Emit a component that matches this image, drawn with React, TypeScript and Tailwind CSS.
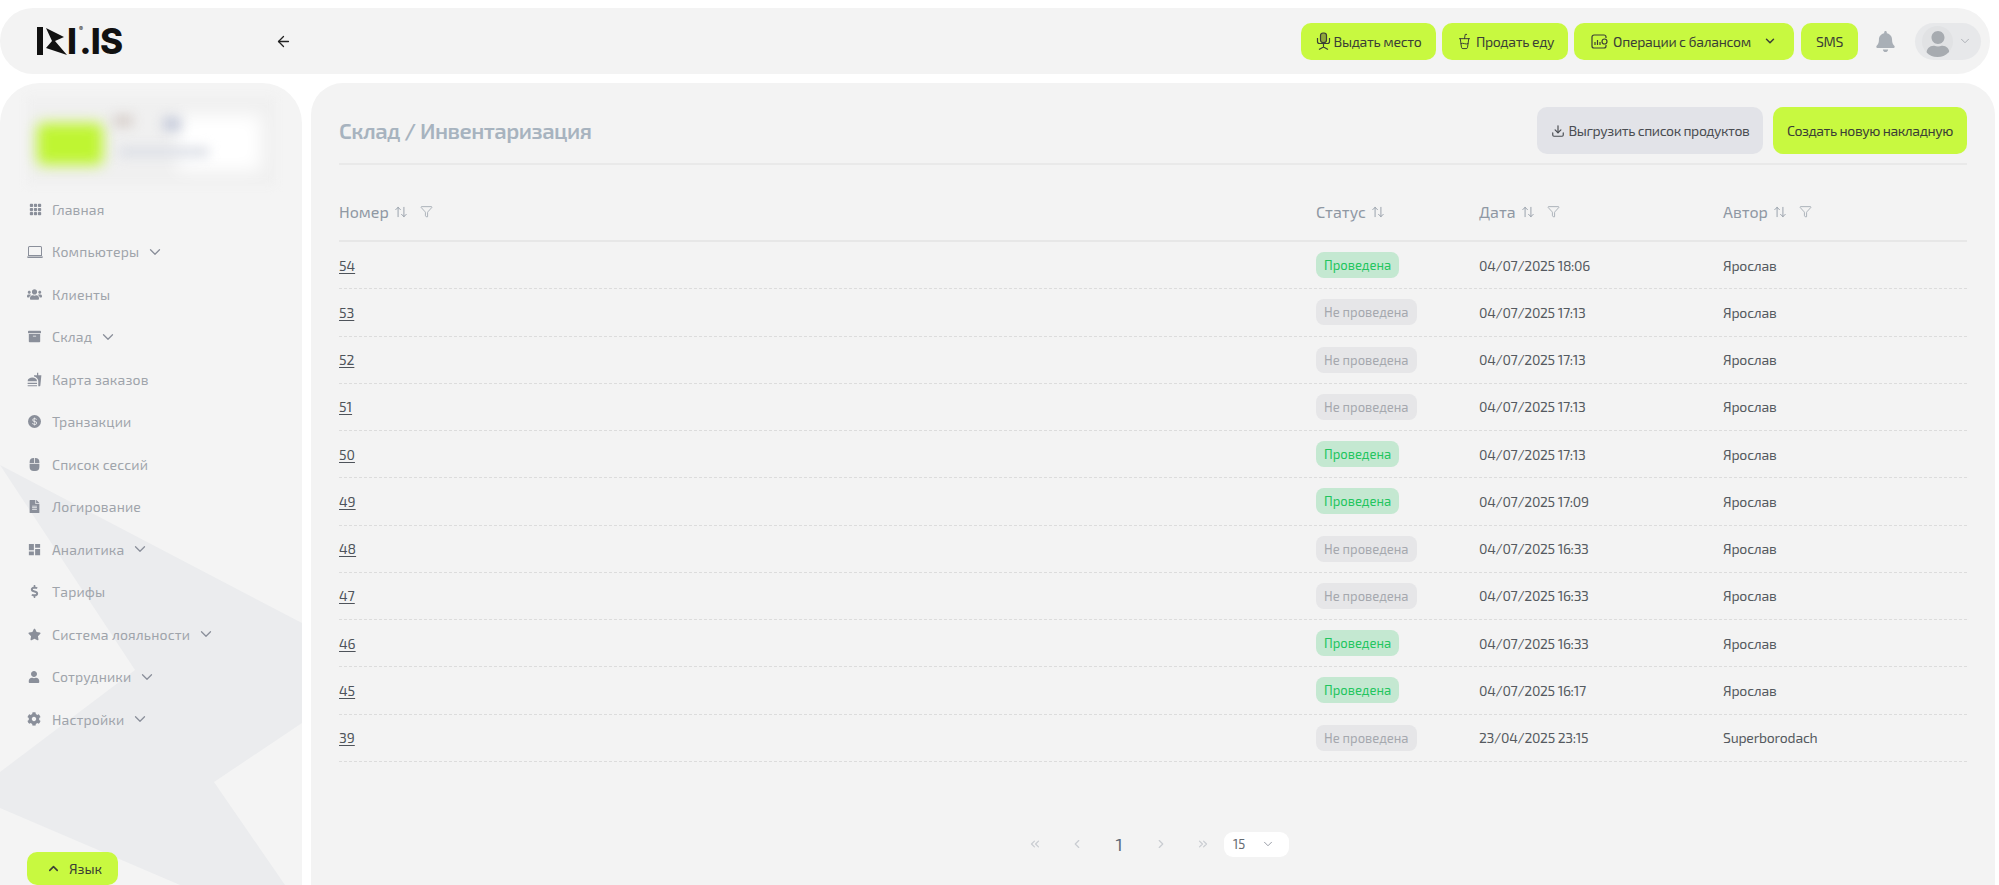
import {
  FaArchive,
  FaBell,
  FaCog,
  FaDollarSign,
  FaFileAlt,
  FaMouse,
  FaStar,
  FaUser,
  FaUsers,
} from 'react-icons/fa'
import { MdDashboard, MdFastfood } from 'react-icons/md'
import { BsGrid3X3GapFill, BsLaptop, BsCurrencyDollar } from 'react-icons/bs'
import {
  ArrowLeft,
  ArrowUpDown,
  ChevronDown,
  ChevronLeft,
  ChevronRight,
  ChevronUp,
  ChevronsLeft,
  ChevronsRight,
  CupSoda,
  Download,
  Filter,
} from 'lucide-react'
import type { ReactNode } from 'react'

const font = "font-['Exo_2','Roboto','Noto_Sans',sans-serif]"

const menu: { label: string; icon: ReactNode; more?: boolean }[] = [
  { label: 'Главная', icon: <BsGrid3X3GapFill size={13} className="ml-[2px]" /> },
  { label: 'Компьютеры', icon: <BsLaptop size={16} />, more: true },
  { label: 'Клиенты', icon: <FaUsers size={15} /> },
  { label: 'Склад', icon: <FaArchive size={13} className="ml-[1px]" />, more: true },
  { label: 'Карта заказов', icon: <MdFastfood size={15} /> },
  {
    label: 'Транзакции',
    icon: (
      <span className="ml-[1px] flex h-[13px] w-[13px] items-center justify-center rounded-full bg-[#8a8f9a] text-[#f3f3f3]">
        <BsCurrencyDollar size={9} />
      </span>
    ),
  },
  { label: 'Список сессий', icon: <FaMouse size={13} className="ml-[1px]" /> },
  { label: 'Логирование', icon: <FaFileAlt size={13} className="ml-[1px]" /> },
  { label: 'Аналитика', icon: <MdDashboard size={15} />, more: true },
  { label: 'Тарифы', icon: <FaDollarSign size={13} className="ml-[1px]" /> },
  { label: 'Система лояльности', icon: <FaStar size={13} className="ml-[1px]" />, more: true },
  { label: 'Сотрудники', icon: <FaUser size={12} className="ml-[1px]" />, more: true },
  { label: 'Настройки', icon: <FaCog size={14} />, more: true },
]

const done = 'Проведена'
const notDone = 'Не проведена'

const rows = [
  { id: 54, status: done, date: '04/07/2025 18:06', author: 'Ярослав' },
  { id: 53, status: notDone, date: '04/07/2025 17:13', author: 'Ярослав' },
  { id: 52, status: notDone, date: '04/07/2025 17:13', author: 'Ярослав' },
  { id: 51, status: notDone, date: '04/07/2025 17:13', author: 'Ярослав' },
  { id: 50, status: done, date: '04/07/2025 17:13', author: 'Ярослав' },
  { id: 49, status: done, date: '04/07/2025 17:09', author: 'Ярослав' },
  { id: 48, status: notDone, date: '04/07/2025 16:33', author: 'Ярослав' },
  { id: 47, status: notDone, date: '04/07/2025 16:33', author: 'Ярослав' },
  { id: 46, status: done, date: '04/07/2025 16:33', author: 'Ярослав' },
  { id: 45, status: done, date: '04/07/2025 16:17', author: 'Ярослав' },
  { id: 39, status: notDone, date: '23/04/2025 23:15', author: 'Superborodach' },
]

function ChairIcon() {
  return (
    <svg width="15" height="19" viewBox="0 0 15 19" fill="none" stroke="currentColor" strokeWidth="1.2">
      <rect x="4.5" y="1" width="6" height="9.5" rx="2.5" fill="#8fa83a" />
      <path d="M1.5 6v3.5a2 2 0 0 0 2 2h8a2 2 0 0 0 2-2V6M7.5 11.5V15M3 17.5l4.5-2.5 4.5 2.5" />
    </svg>
  )
}

function WalletIcon() {
  return (
    <svg width="17" height="15" viewBox="0 0 17 15" fill="none" stroke="currentColor" strokeWidth="1.2">
      <path d="M15 4V3a2 2 0 0 0-2-2H3a2 2 0 0 0-2 2v9a2 2 0 0 0 2 2h10a2 2 0 0 0 2-2v-1" />
      <circle cx="13.5" cy="7.5" r="2.5" />
      <path d="M4 11V8M6.5 11V6M9 11V8" />
    </svg>
  )
}

function TopButton({ width, children }: { width: string; children: ReactNode }) {
  return (
    <button className={`flex h-[37px] items-center justify-center gap-[3px] rounded-[10px] bg-[#c8f940] text-[14px] tracking-[-0.3px] text-[#3b3f36] ${width}`}>
      {children}
    </button>
  )
}

function HeadCell({ label, filter = true }: { label: string; filter?: boolean }) {
  return (
    <div className="flex items-center text-[16px] text-[#8f98a3]">
      <span>{label}</span>
      <ArrowUpDown size={14} strokeWidth={1.5} className="ml-[5px]" />
      {filter && <Filter size={13} strokeWidth={1.3} className="ml-[12px]" />}
    </div>
  )
}

export default function App() {
  return (
    <div className={`${font} h-[885px] overflow-hidden bg-white`}>
      {/* top bar */}
      <header className="mt-2 flex h-[66px] w-[1990px] items-center rounded-[33px] bg-[#f3f3f3] pr-[9px] pl-[37px]">
        <div className="flex w-[238px] items-center">
          <svg width="30" height="29" viewBox="0 0 30 29" fill="#111" className="shrink-0">
            <rect x="0" y="0" width="6" height="28" />
            <polygon points="9,1 27,10 18,14 30,28 9,21 15,14" />
          </svg>
          <span className="relative flex items-center font-['Inter',sans-serif] text-[35px] leading-none font-extrabold tracking-[-0.8px] text-[#111]">
            I<span className="ml-[3px]">.IS</span>
            <span className="absolute top-[2px] left-[12px] text-[6px] leading-none font-normal">®</span>
          </span>
        </div>
        <ArrowLeft size={17} strokeWidth={1.8} className="text-[#222]" />
        <div className="ml-auto flex items-center gap-[6px]">
          <TopButton width="w-[135px]">
            <ChairIcon />
            Выдать место
          </TopButton>
          <TopButton width="w-[126px]">
            <CupSoda size={17} strokeWidth={1.4} />
            Продать еду
          </TopButton>
          <TopButton width="w-[220px]">
            <WalletIcon />
            <span className="ml-[2px]">Операции с балансом</span>
            <ChevronDown size={14} strokeWidth={2.5} className="ml-[9px]" />
          </TopButton>
          <div className="ml-[1px]">
            <TopButton width="w-[57px]">SMS</TopButton>
          </div>
          <FaBell size={21} className="mr-[13px] ml-[11px] text-[#a9afb6]" />
          <div className="flex h-[37px] w-[66px] items-center rounded-[19px] bg-[#e7e8ea] pl-[7px]">
            <span className="flex h-[31px] w-[31px] items-end justify-center overflow-hidden rounded-full bg-[#e1e2e4] text-[#a7abb0]">
              <FaUser size={26} />
            </span>
            <ChevronDown size={14} strokeWidth={1.3} className="ml-[5px] text-[#9a9fa6]" />
          </div>
        </div>
      </header>

      <div className="mt-[9px] flex gap-[9px]">
        {/* sidebar */}
        <aside className="relative h-[802px] w-[302px] shrink-0 overflow-hidden rounded-t-[40px] bg-[#f4f4f4]">
          <svg className="absolute top-[-83px] left-0" width="302" height="885" viewBox="0 0 302 885" fill="#ebecee">
            <polygon points="0,465 302,623 302,723 214,782 285,885 180,885 0,808 0,772 135,670" />
          </svg>
          <div className="relative">
            {/* blurred club card */}
            <div className="relative mx-[27px] mt-[14px] h-[88px]">
              <div className="absolute inset-0 bg-[#f0f0f0] blur-[4px]" />
              <div className="absolute top-[26px] left-[10px] h-[42px] w-[66px] rounded-[6px] bg-[#bff532] blur-[7px]" />
              <div className="absolute top-[18px] right-[14px] h-[56px] w-[84px] bg-white blur-[9px]" />
              <div className="absolute top-[18px] left-[86px] h-[12px] w-[20px] bg-[#d8d0cc] blur-[6px]" />
              <div className="absolute top-[20px] left-[136px] h-[14px] w-[18px] bg-[#c6cbdb] blur-[6px]" />
              <div className="absolute top-[50px] left-[92px] h-[10px] w-[90px] bg-[#dcdfe6] blur-[6px]" />
            </div>
            <nav className="mt-[3px] flex flex-col pl-[27px]">
              {menu.map((item) => (
                <div key={item.label} className="flex h-[42.5px] items-center text-[14px] tracking-[0.15px] text-[#9fa4ab]">
                  <span className="flex w-[25px] shrink-0 text-[#8a8f9a]">{item.icon}</span>
                  <span>{item.label}</span>
                  {item.more && <ChevronDown size={18} strokeWidth={1.7} className="ml-[7px] text-[#8a8f9a]" />}
                </div>
              ))}
            </nav>
          </div>
          <button className="absolute bottom-0 left-[27px] flex h-[33px] w-[91px] items-center rounded-[10px] bg-[#c8f940] pl-[19px] text-[14px] text-[#3b3f36]">
            <ChevronUp size={15} strokeWidth={2.5} />
            <span className="ml-[8px]">Язык</span>
          </button>
        </aside>

        {/* main panel */}
        <main className="h-[802px] w-[1684px] shrink-0 rounded-t-[32px] bg-[#f3f3f3] pr-[28px] pl-[28px]">
          <div className="flex h-[82px] items-center justify-between border-b-2 border-[#e9e9e9] pt-[24px] pb-[9px]">
            <h1 className="text-[22px] font-semibold tracking-[-0.5px] text-[#a7b3bf]">Склад / Инвентаризация</h1>
            <div className="flex gap-[10px]">
              <button className="flex h-[47px] w-[226px] items-center justify-center gap-[4px] rounded-[10px] bg-[#e2e3e8] text-[14px] tracking-[-0.4px] text-[#4a4d52]">
                <Download size={14} strokeWidth={2} />
                Выгрузить список продуктов
              </button>
              <button className="flex h-[47px] w-[194px] items-center justify-center rounded-[10px] bg-[#c8f940] text-[14px] tracking-[-0.4px] text-[#3b3f36]">
                Создать новую накладную
              </button>
            </div>
          </div>

          <div className="grid h-[77px] grid-cols-[977px_163px_244px_1fr] items-center border-b-2 border-[#e7e7e7] pt-[18px]">
            <HeadCell label="Номер" />
            <HeadCell label="Статус" filter={false} />
            <HeadCell label="Дата" />
            <HeadCell label="Автор" />
          </div>

          {rows.map((row) => (
            <div
              key={row.id}
              className="grid h-[47.25px] grid-cols-[977px_163px_244px_1fr] items-center border-b border-dashed border-[#dcdcdc] text-[14px] text-[#555a60]"
            >
              <a className="text-[14px] text-[#4e535a] underline underline-offset-2">{row.id}</a>
              <div>
                <span
                  className={
                    row.status === done
                      ? 'inline-block rounded-[8px] bg-[#c4e8d1] px-[8px] py-[4px] text-[13px] leading-[18px] text-[#22c55e]'
                      : 'inline-block rounded-[8px] bg-[#e6e6e8] px-[8px] py-[4px] text-[13px] leading-[18px] text-[#a5a8ae]'
                  }
                >
                  {row.status}
                </span>
              </div>
              <span className="tracking-[-0.3px]">{row.date}</span>
              <span className="tracking-[-0.2px]">{row.author}</span>
            </div>
          ))}

          {/* pagination */}
          <div className="mt-[69px] -ml-[3px] flex items-center justify-center text-[#c9ccd1]">
            <span className="flex w-[42px] justify-center"><ChevronsLeft size={14} /></span>
            <span className="flex w-[42px] justify-center"><ChevronLeft size={14} /></span>
            <span className="flex w-[42px] justify-center text-[18px] text-[#5f6b7a]">1</span>
            <span className="flex w-[42px] justify-center"><ChevronRight size={14} /></span>
            <span className="flex w-[42px] justify-center"><ChevronsRight size={14} /></span>
            <div className="flex h-[25px] w-[65px] items-center justify-between rounded-[9px] bg-white pr-[14px] pl-[9px] text-[13px] text-[#666b72]">
              15
              <ChevronDown size={14} strokeWidth={1.5} className="text-[#8a8f9a]" />
            </div>
          </div>
        </main>
      </div>
    </div>
  )
}
